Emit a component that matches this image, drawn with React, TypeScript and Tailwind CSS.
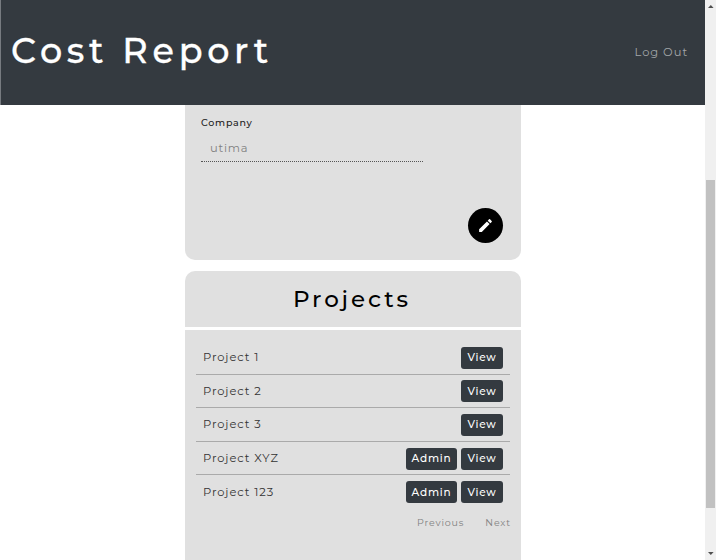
import React from "react";

type Project = { name: string; admin: boolean };

const projects: Project[] = [
  { name: "Project 1", admin: false },
  { name: "Project 2", admin: false },
  { name: "Project 3", admin: false },
  { name: "Project XYZ", admin: true },
  { name: "Project 123", admin: true },
];

function Header() {
  return (
    <header className="flex h-[105px] shrink-0 items-center justify-between border-l border-[#777b80] bg-[#343a40] pr-[17px] pl-[10px]">
      <h1 className="pb-[4px] text-[35px] leading-[42px] font-medium tracking-[4.7px] whitespace-nowrap text-white [-webkit-text-stroke:0.3px_white]">
        Cost Report
      </h1>
      <a className="pb-[2px] text-[11.5px] leading-4 tracking-[0.95px] text-[#a3a6a9]">Log Out</a>
    </header>
  );
}

function CompanyCard() {
  return (
    <section className="flex h-[155px] shrink-0 flex-col rounded-b-[10px] bg-[#e0e0e0] pr-[17px] pl-[16px]">
      <label className="mt-[11px] text-[9.5px] leading-[14px] font-medium tracking-[0.75px] text-[#222]">
        Company
      </label>
      <div className="mt-[10px] h-[22px] w-[222px] border-b border-dotted border-[#555] pl-[9px] text-[11.5px] leading-[16px] tracking-[0.75px] text-[#808080]">
        utima
      </div>
      <button className="mt-[45.5px] mr-px flex size-[35px] items-center justify-center self-end rounded-full bg-black">
        <svg viewBox="0 0 24 24" className="size-[17px] fill-white">
          <path d="M3 17.25V21h3.75L17.81 9.94l-3.75-3.75L3 17.25zM20.71 7.04a1 1 0 0 0 0-1.41l-2.34-2.34a1 1 0 0 0-1.41 0l-1.83 1.83 3.75 3.75 1.83-1.83z" />
        </svg>
      </button>
    </section>
  );
}

function ActionButton({ label, size }: { label: string; size: string }) {
  return (
    <button
      className={`${size} mt-px flex h-[22px] items-center justify-center rounded-[3px] bg-[#343a40] pt-px text-[10.5px] leading-none font-medium text-white`}
    >
      {label}
    </button>
  );
}

function ProjectsCard() {
  return (
    <section className="mt-[11px] flex grow flex-col">
      <div className="flex h-[56px] shrink-0 items-center justify-center rounded-t-[10px] bg-[#e0e0e0] pr-[2px]">
        <h2 className="text-[23px] leading-7 font-medium tracking-[2.9px] text-black">Projects</h2>
      </div>
      <div className="mt-[3px] grow bg-[#e0e0e0] pt-[11px] pr-[11px] pl-[11px]">
        <ul className="divide-y divide-[#aaa]">
          {projects.map((p) => (
            <li key={p.name} className="flex h-[33.6px] items-center gap-[4px] pr-[7px] pl-[7px] last:h-[33px]">
              <span className="grow text-[11.5px] leading-4 tracking-[0.9px] text-[#333]">{p.name}</span>
              {p.admin && <ActionButton label="Admin" size="w-[51px] tracking-[0.8px]" />}
              <ActionButton label="View" size="w-[42px] tracking-[0.8px]" />
            </li>
          ))}
        </ul>
        <div className="mt-[6.6px] -mr-px flex justify-end gap-[21px] text-[9.5px] leading-[16px] text-[#808080]">
          <span className="tracking-[0.85px]">Previous</span>
          <span className="tracking-[0.85px]">Next</span>
        </div>
      </div>
    </section>
  );
}

function ScrollBar() {
  return (
    <div className="flex w-[11px] shrink-0 flex-col items-center bg-[#f0f0f0]">
      <svg viewBox="0 0 11 11" className="h-[11px] w-[11px] shrink-0 fill-[#505050]">
        <path d="M3 8 L5.8 5 L8.6 8z" />
      </svg>
      <div className="mt-[169px] h-[328px] w-[9px] bg-[#c1c1c1]" />
      <svg viewBox="0 0 11 11" className="mt-auto mb-px h-[11px] w-[11px] shrink-0 fill-[#505050]">
        <path d="M3 4 L8.6 4 L5.8 7z" />
      </svg>
    </div>
  );
}

export default function App() {
  return (
    <div className="flex h-[560px] w-[716px] overflow-hidden bg-white font-['Montserrat','Inter',sans-serif]">
      <div className="flex w-[705px] shrink-0 flex-col">
        <Header />
        <main className="ml-[185px] flex w-[336px] grow flex-col">
          <CompanyCard />
          <ProjectsCard />
        </main>
      </div>
      <ScrollBar />
    </div>
  );
}
